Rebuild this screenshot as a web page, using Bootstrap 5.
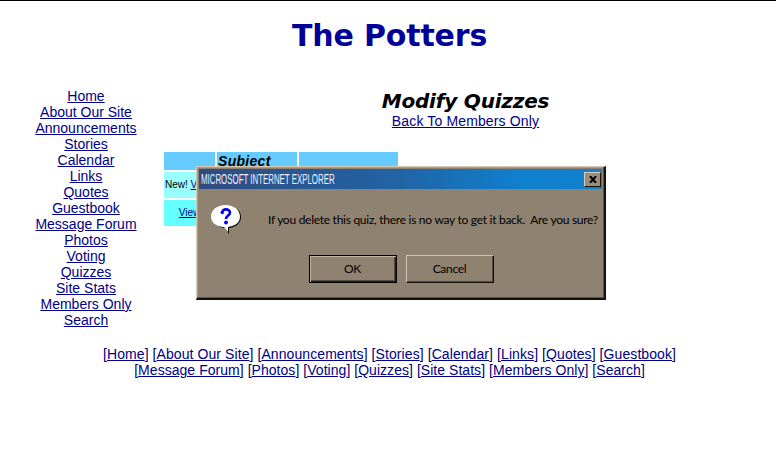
<!DOCTYPE html>
<html lang="en">
<head>
<meta charset="utf-8">
<meta name="viewport" content="width=device-width, initial-scale=1">
<title>The Potters</title>
<link href="https://cdn.jsdelivr.net/npm/bootstrap@5.3.0/dist/css/bootstrap.min.css" rel="stylesheet">
<style>
body{font:14px/16px "Liberation Sans",Arial,sans-serif;color:#000066;height:457px;overflow:hidden;border-top:1px solid #000;background:#fff}
a{color:#000087;text-decoration:underline;text-underline-offset:1px}
.site-title{font:bold 30px/36px "DejaVu Sans",sans-serif;color:#000099;padding-top:17px;height:87px;margin:0;padding-left:3px;letter-spacing:-.15px}
.main-area{height:258px}
.side-menu{width:172px}
.content-area{width:600px;margin-left:-8px}
.page-heading{font:italic bold 20px/24px "DejaVu Sans",sans-serif;color:#000;margin:1px 0 0;letter-spacing:-.2px}
.back-link{letter-spacing:.14px}
.content-head{padding-left:3px}
.quiz-table{width:238px;border-collapse:separate;border-spacing:2px;table-layout:fixed;margin:21px 0 0 -2px;font-size:10px;line-height:14px;color:#000}
.quiz-table td,.quiz-table th{padding:0;overflow:hidden;white-space:nowrap}
.quiz-table th{background:#66ccff;height:18px;font:italic bold 14px/18px "Liberation Sans",sans-serif}
.quiz-table .subject-head{padding-left:1px;letter-spacing:.3px}
.quiz-table td{background:#99ffff;height:26px}
.quiz-table tr:last-child td{background:#66ffff}
.quiz-table .new-quiz{padding-left:1px}
.bottom-links{padding-left:3px;letter-spacing:.08px}
.bottom-links div:last-child{letter-spacing:.04px}
.dialog-window{left:196px;top:165px;width:410px;height:134px;background:#8f8271;border:1px solid #d4c7b5;border-right:2px solid #14110e;border-bottom:2px solid #14110e;color:#000;box-shadow:inset -1px -1px #5c5246,inset 1px 1px #aa9d8b}
.dialog-title{height:20px;margin:2px 2px 0;background:linear-gradient(90deg,#304c80,#2164a6 50%,#0f80ce 80%,#1282d0);padding:0 1px 0 2px}
.dialog-caption{font:15px/20px "Liberation Sans",sans-serif;color:#eef3ff;transform:scaleX(.525);transform-origin:left;white-space:nowrap}
.close-box{width:17px;height:15px;background:#9b8d7b;border:1px solid #d8cbb9;border-right-color:#18130e;border-bottom-color:#18130e}
.dialog-message{height:62px;padding-left:14px}
.message-text{font:12px/16px Lato,sans-serif;letter-spacing:-.27px;margin-left:26px;white-space:pre;margin-top:-1px}
.dialog-choices{gap:9px;padding:4px 0 0 1px}
.dialog-button{width:88px;height:28px;background:#8f8271;border:1px solid #d1c4b2;border-right:1px solid #15110d;border-bottom:1px solid #15110d;border-radius:0;padding:0;font:12px/26px Lato,sans-serif;letter-spacing:-.3px;color:#000;box-shadow:inset -1px -1px #554c41}
.dialog-button.default-choice{border:1px solid #000;box-shadow:inset 1px 1px #c1b3a0,inset -1px -1px #251f19,inset -2px -2px #554c41}
</style>
<script src="https://cdn.jsdelivr.net/npm/bootstrap@5.3.0/dist/js/bootstrap.bundle.min.js"></script>
</head>
<body class="position-relative">
<h1 class="site-title text-center">The Potters</h1>
<div class="main-area d-flex">
<nav class="side-menu d-flex flex-column align-items-center flex-shrink-0">
<a href="#">Home</a><a href="#">About Our Site</a><a href="#">Announcements</a><a href="#">Stories</a><a href="#">Calendar</a><a href="#">Links</a><a href="#">Quotes</a><a href="#">Guestbook</a><a href="#">Message Forum</a><a href="#">Photos</a><a href="#">Voting</a><a href="#">Quizzes</a><a href="#">Site Stats</a><a href="#">Members Only</a><a href="#">Search</a>
</nav>
<main class="content-area">
<div class="content-head text-center"><h2 class="page-heading">Modify Quizzes</h2><a class="back-link" href="#">Back To Members Only</a></div>
<table class="quiz-table">
<colgroup><col style="width:51px"><col style="width:80px"><col></colgroup>
<tr><th></th><th class="subject-head">Subject</th><th></th></tr>
<tr><td class="new-quiz">New! <a href="#">View</a></td><td></td><td></td></tr>
<tr><td class="text-center"><a href="#">View</a></td><td></td><td></td></tr>
</table>
</main>
</div>
<footer class="bottom-links text-center">
<div>[<a href="#">Home</a>] [<a href="#">About Our Site</a>] [<a href="#">Announcements</a>] [<a href="#">Stories</a>] [<a href="#">Calendar</a>] [<a href="#">Links</a>] [<a href="#">Quotes</a>] [<a href="#">Guestbook</a>]</div>
<div>[<a href="#">Message Forum</a>] [<a href="#">Photos</a>] [<a href="#">Voting</a>] [<a href="#">Quizzes</a>] [<a href="#">Site Stats</a>] [<a href="#">Members Only</a>] [<a href="#">Search</a>]</div>
</footer>
<section class="dialog-window position-absolute" role="dialog" aria-label="Microsoft Internet Explorer">
<div class="dialog-title d-flex align-items-center justify-content-between">
<span class="dialog-caption">MICROSOFT INTERNET EXPLORER</span>
<span class="close-box d-flex align-items-center justify-content-center flex-shrink-0"><svg width="8" height="7" viewBox="0 0 8 7"><path d="M1 0l6 7M7 0L1 7" stroke="#000" stroke-width="2"/></svg></span>
</div>
<div class="dialog-message d-flex align-items-center">
<svg class="flex-shrink-0" width="31" height="30" viewBox="0 0 31 30"><path d="M15 1C6 1 1 6 1 12c0 6 5 10 13 11l4 6v-6c7-1 12-5 12-11C30 5 24 1 15 1z" fill="#000"/><path d="M14.500 0C6 0 0 5 0 11.500 0 18 6 22 13 22l4 5v-5c7-1 12-4 12-10.500C29 5 23 0 14.500 0z" fill="#fff"/><path d="M11 8c0-5 8-4.500 8-.5 0 3-4 3-4 6.500" fill="none" stroke="#0000ef" stroke-width="2.600"/><circle cx="11.300" cy="7.500" r="1.700" fill="#0000ef"/><circle cx="15" cy="17.500" r="1.900" fill="#0000ef"/></svg>
<span class="message-text">If you delete this quiz, there is no way to get it back.  Are you sure?</span>
</div>
<div class="dialog-choices d-flex justify-content-center"><button class="btn dialog-button default-choice">OK</button><button class="btn dialog-button">Cancel</button></div>
</section>
</body>
</html>
